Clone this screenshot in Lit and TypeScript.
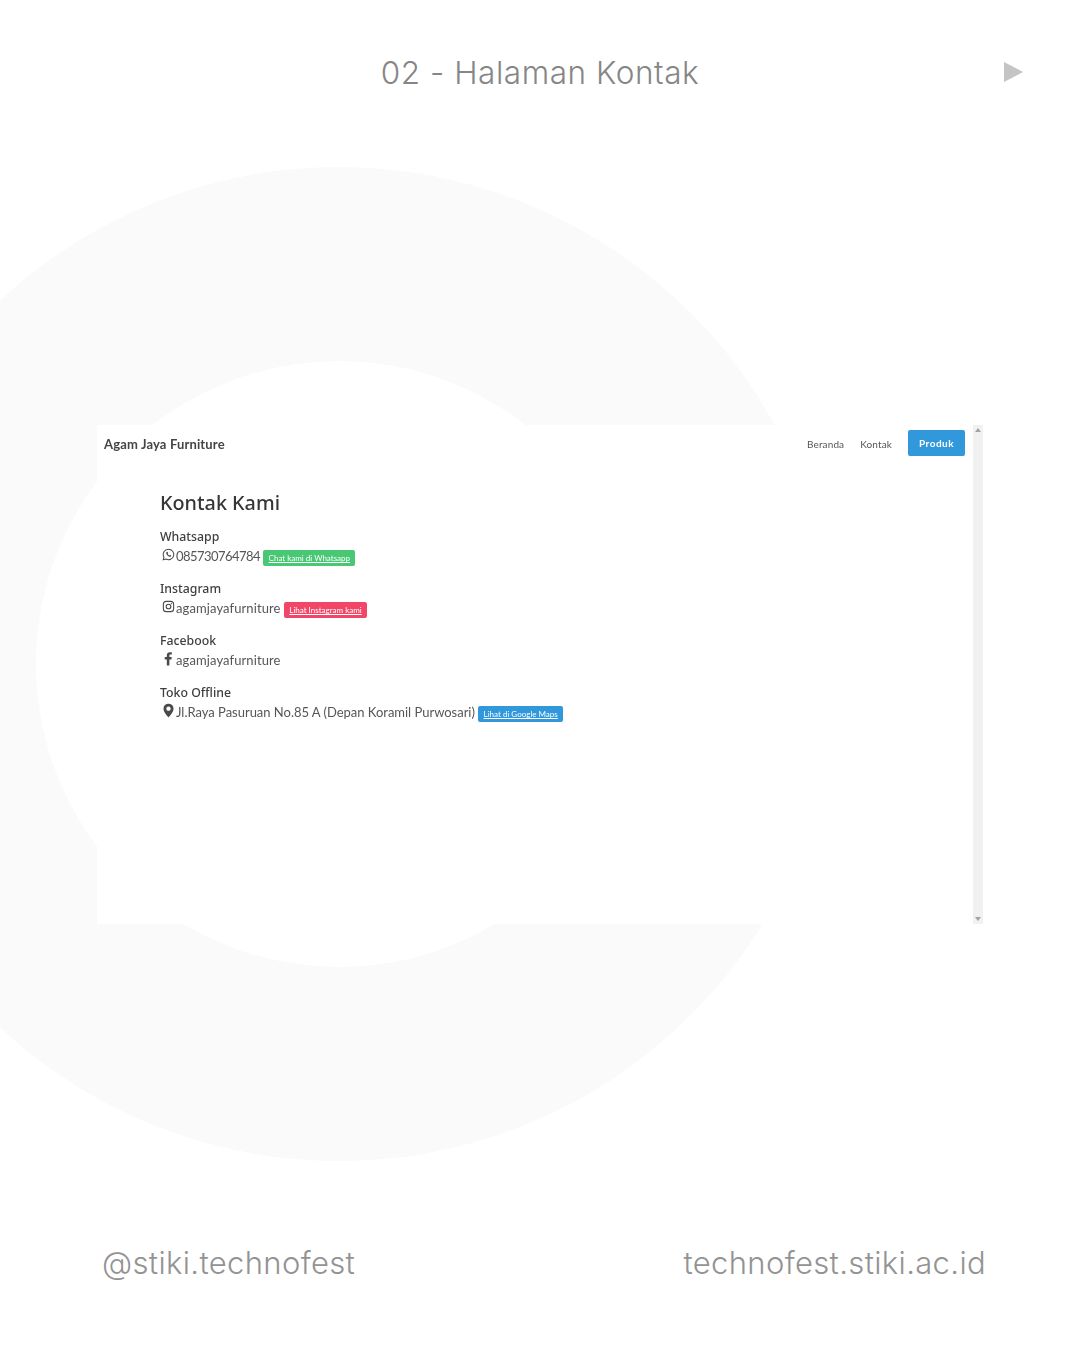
import { LitElement, html, css } from "lit";
import { customElement } from "lit/decorators.js";

const whatsappIcon = html`<svg class="ico" viewBox="0 0 24 24" fill="none" stroke="currentColor" stroke-width="1.9"><path d="M12 2.200a9.700 9.700 0 0 0-8.400 14.600L2.400 21.600l4.900-1.200A9.700 9.700 0 1 0 12 2.200z"/><path d="M8.700 7.200c-.9.600-1.300 1.700-.9 3 .8 2.800 3.200 5.100 6 5.900 1.300.3 2.300 0 3-.9.3-.5.3-1-.1-1.300l-1.600-.9c-.4-.2-.7-.1-1 .2l-.5.600c-1.400-.5-2.700-1.700-3.200-3.100l.6-.6c.3-.3.3-.6.2-1L10.400 7.400c-.3-.5-1.200-.6-1.700-.2z" fill="currentColor" stroke="none"/></svg>`;
const instagramIcon = html`<svg class="ico" viewBox="0 0 24 24" fill="none" stroke="currentColor" stroke-width="2"><rect x="2.500" y="2.500" width="19" height="19" rx="5.500"/><circle cx="12" cy="12" r="4.300"/><circle cx="17.400" cy="6.600" r="1.200" fill="currentColor" stroke="none"/></svg>`;
const facebookIcon = html`<svg class="ico big" viewBox="0 0 24 24" fill="currentColor"><path d="M9.300 23V13.500H6v-3.800h3.300V7c0-3.300 2-5.100 5-5.100 1.400 0 2.600.1 3 .2v3.400h-2c-1.600 0-1.900.8-1.900 1.900v2.300h3.800l-.5 3.800h-3.300V23z"/></svg>`;
const pinIcon = html`<svg class="ico big" viewBox="0 0 24 24" fill="currentColor"><path fill-rule="evenodd" d="M12 1a8 8 0 0 0-8 8c0 5 5 10.500 8 14 3-3.500 8-9 8-14a8 8 0 0 0-8-8zm0 4.500a3.500 3.500 0 1 1 0 7 3.500 3.500 0 0 1 0-7z"/></svg>`;

const contacts = [
  { label: "Whatsapp", icon: whatsappIcon, text: "085730764784", spacing: -0.55, tag: "Chat kami di Whatsapp", kind: "green" },
  { label: "Instagram", icon: instagramIcon, text: "agamjayafurniture", spacing: 0.1, tag: "Lihat Instagram kami", kind: "red" },
  { label: "Facebook", icon: facebookIcon, text: "agamjayafurniture", spacing: 0.1, tag: "", kind: "" },
  { label: "Toko Offline", icon: pinIcon, text: "Jl.Raya Pasuruan No.85 A (Depan Koramil Purwosari)", spacing: -0.02, tag: "Lihat di Google Maps", kind: "blue" },
];

@customElement("app-root")
export class AppRoot extends LitElement {
  static styles = css`
    :host {
      display: block;
      width: 1080px;
      height: 1350px;
      position: relative;
      overflow: hidden;
      background: #fff;
      font-family: "Lato", "Noto Sans", sans-serif;
    }
    .ring {
      position: absolute;
      left: -158px;
      top: 167px;
      width: 994px;
      height: 994px;
    }
    .page {
      position: relative;
      display: flex;
      flex-direction: column;
      height: 1350px;
    }
    .head {
      height: 145px;
      padding-top: 53px;
      box-sizing: border-box;
      text-align: center;
      position: relative;
      font-family: "Inter", sans-serif;
      font-weight: 300;
      font-size: 31.500px;
      line-height: 40px;
      letter-spacing: 0.55px;
      color: #868686;
    }
    .play {
      position: absolute;
      left: 1004px;
      top: 62px;
      width: 19px;
      height: 20px;
    }
    .window {
      margin: 280px 97px 0;
      height: 499px;
      display: flex;
      background: #fff;
    }
    .main {
      flex: 1;
      min-width: 0;
      filter: blur(0.3px);
    }
    .nav {
      display: flex;
      align-items: center;
      height: 38px;
      padding: 0 0 0 7px;
    }
    .brand {
      font-size: 13px;
      font-weight: 700;
      color: #454545;
      margin-right: auto;
      letter-spacing: 0.15px;
    }
    .link {
      font-size: 10px;
      color: #555;
      margin-right: 16px;
      letter-spacing: 0.12px;
    }
    .btn {
      width: 57px;
      height: 26px;
      display: flex;
      align-items: center;
      justify-content: center;
      margin-bottom: 2px;
      background: #3298dc;
      border-radius: 2px;
      color: #fff;
      font-size: 10px;
      font-weight: 700;
      letter-spacing: 0.5px;
    }
    .content {
      padding: 26px 0 0 63px;
      color: #4a4a4a;
    }
    h1 {
      margin: 0 0 11px;
      font-family: "Noto Sans", sans-serif;
      font-size: 19.800px;
      line-height: 28px;
      font-weight: 500;
      color: #363636;
    }
    .group {
      height: 52px;
    }
    .label {
      font-family: "Noto Sans", sans-serif;
      font-size: 12.300px;
      line-height: 18px;
      font-weight: 500;
      color: #3f3f3f;
    }
    .row {
      display: flex;
      align-items: center;
      height: 19px;
      padding-left: 0.500px;
      font-size: 13px;
      color: #565656;
    }
    .iconbox {
      width: 15.500px;
      height: 16px;
      display: flex;
      justify-content: center;
      align-items: center;
      margin-top: -3px;
    }
    .ico {
      width: 13px;
      height: 13px;
      flex: none;
      color: #4a4a4a;
    }
    .ico.big {
      width: 15px;
      height: 15px;
    }
    .tag {
      display: inline-flex;
      align-items: center;
      height: 16px;
      margin: 5px 0 0 3.500px;
      padding: 0 5.200px;
      border-radius: 2px;
      color: #fff;
      font-size: 8px;
      text-decoration: underline;
    }
    .green { background: #48c774; }
    .red { background: #f14668; }
    .blue { background: #3298dc; }
    .scroll {
      width: 10px;
      margin-left: 8px;
      background: #f1f1f1;
      display: flex;
      flex-direction: column;
      justify-content: space-between;
      align-items: center;
      padding: 3px 0;
      box-sizing: border-box;
    }
    .arrow {
      width: 6px;
      height: 4px;
      display: block;
    }
    .foot {
      margin-top: 319px;
      padding: 0 94px 0 102px;
      display: flex;
      justify-content: space-between;
      font-family: "Inter", sans-serif;
      font-weight: 300;
      font-size: 31px;
      line-height: 40px;
      letter-spacing: 0.35px;
      color: #939393;
    }
  `;

  render() {
    return html`
      <svg class="ring" viewBox="0 0 994 994"><circle cx="497" cy="497" r="400" fill="none" stroke="#fafafa" stroke-width="194"/></svg>
      <div class="page">
        <div class="head">
          02 - Halaman Kontak
          <svg class="play" viewBox="0 0 19 20"><path d="M0 0L19 10L0 20z" fill="#c4c4c4"/></svg>
        </div>
        <div class="window">
          <div class="main">
            <div class="nav">
              <span class="brand">Agam Jaya Furniture</span>
              <span class="link">Beranda</span>
              <span class="link">Kontak</span>
              <span class="btn">Produk</span>
            </div>
            <div class="content">
              <h1>Kontak Kami</h1>
              ${contacts.map(
                (c) => html`
                  <div class="group">
                    <div class="label">${c.label}</div>
                    <div class="row">
                      <span class="iconbox">${c.icon}</span>
                      <span style="letter-spacing:${c.spacing}px">${c.text}</span>
                      ${c.tag ? html`<span class="tag ${c.kind}">${c.tag}</span>` : ""}
                    </div>
                  </div>
                `
              )}
            </div>
          </div>
          <div class="scroll">
            <svg class="arrow" viewBox="0 0 6 4"><path d="M3 0L6 4H0z" fill="#a3a3a3"/></svg>
            <svg class="arrow" viewBox="0 0 6 4"><path d="M0 0H6L3 4z" fill="#a3a3a3"/></svg>
          </div>
        </div>
        <div class="foot">
          <span>@stiki.technofest</span>
          <span>technofest.stiki.ac.id</span>
        </div>
      </div>
    `;
  }
}
